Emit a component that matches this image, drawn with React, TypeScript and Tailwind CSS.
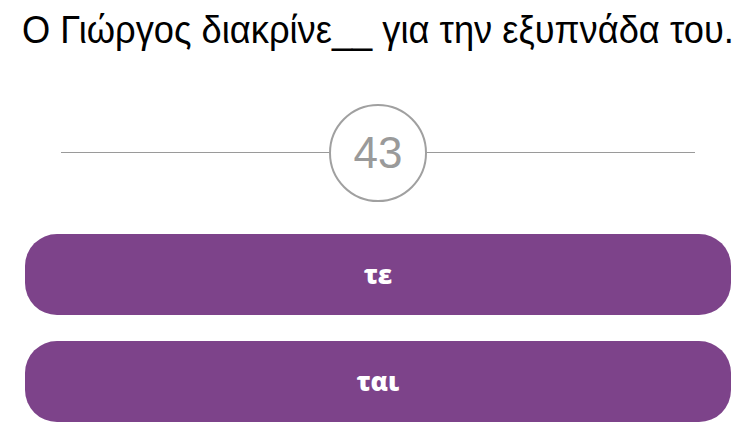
export default function App() {
  return (
    <div className="w-[745px] h-[434px] bg-white overflow-hidden flex flex-col">
      <div className="pt-[8px] pl-[22px] h-[52px]">
        <div
          className="origin-left scale-x-[0.93] text-[39px] leading-[44px] text-black whitespace-nowrap"
          style={{ fontFamily: '"Liberation Sans", Arial, sans-serif' }}
        >
          Ο Γιώργος διακρίνε__ για την εξυπνάδα του.
        </div>
      </div>
      <div className="relative mt-[52px] ml-[61px] mr-[50px] h-[98px] flex items-center justify-center">
        <div className="absolute left-0 right-0 top-[48px] h-px bg-[#9a9a9a]" />
        <div
          className="relative w-[98px] h-[98px] rounded-full border-2 border-[#a0a0a0] bg-white flex items-center justify-center text-[44px] text-[#9a9a9a]"
          style={{ fontFamily: '"Liberation Sans", Arial, sans-serif' }}
        >
          43
        </div>
      </div>
      <div className="mt-[32px] pl-[25px] pr-[14px] flex flex-col gap-[26px]">
        <div
          className="h-[81px] rounded-[32px] bg-[#7d438a] flex items-center justify-center text-white text-[26px] font-extrabold"
          style={{ fontFamily: '"Open Sans", sans-serif' }}
        >
          τε
        </div>
        <div
          className="h-[81px] rounded-[32px] bg-[#7d438a] flex items-center justify-center text-white text-[26px] font-extrabold"
          style={{ fontFamily: '"Open Sans", sans-serif' }}
        >
          ται
        </div>
      </div>
    </div>
  );
}
